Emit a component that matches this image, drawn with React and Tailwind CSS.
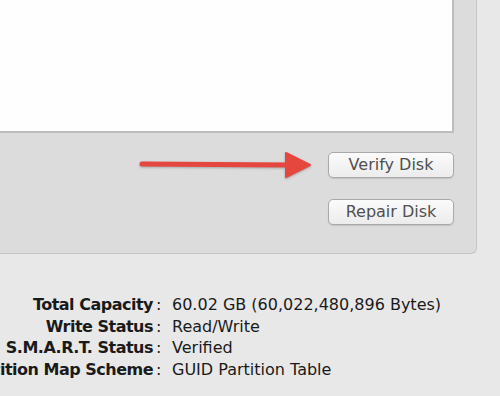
import React from "react";

const rows = [
    ["Total Capacity", "60.02 GB (60,022,480,896 Bytes)"],
    ["Write Status", "Read/Write"],
    ["S.M.A.R.T. Status", "Verified"],
    ["Partition Map Scheme", "GUID Partition Table"],
];

const MacButton = ({ children }) => (
    <button
        type="button"
        className="w-[126px] h-[26px] rounded-[5px] border border-[#a9a9a9] bg-gradient-to-b from-[#fbfbfb] to-[#ececec] shadow-[0_1px_1px_rgba(0,0,0,0.12)] text-[16px] text-[#505050] leading-none"
    >
        {children}
    </button>
);

const Arrow = () => (
    <svg width="176" height="30" viewBox="0 0 176 30" className="drop-shadow-[0_1px_1px_rgba(0,0,0,0.25)]">
        <line x1="4" y1="14" x2="152" y2="15" stroke="#e5473e" strokeWidth="5" strokeLinecap="round" />
        <polygon points="148,3 172,15 148,27" fill="#e5473e" strokeLinejoin="round" stroke="#e5473e" strokeWidth="2" />
    </svg>
);

export default function App() {
    return (
        <div className="w-[500px] h-[396px] overflow-hidden bg-[#e8e8e8] font-['DejaVu_Sans',sans-serif]">
            {/* Disk panel */}
            <div className="w-[477px] h-[254px] bg-[#dcdcdc] border-r border-b border-[#c4c4c4] rounded-br-[6px] flex flex-col">
                <div className="w-[454px] h-[133px] bg-[#fefefe] border-r-2 border-b-2 border-[#bdbdbd]" />
                <div className="flex items-start pr-[22px] pt-[19px]">
                    <div className="w-[138px] mt-[-2px]">
                        <div className="ml-[138px]">
                            <Arrow />
                        </div>
                    </div>
                    <div className="ml-auto flex flex-col gap-[21px]">
                        <MacButton>Verify Disk</MacButton>
                        <MacButton>Repair Disk</MacButton>
                    </div>
                </div>
            </div>

            {/* Info */}
            <div className="pt-[40px] text-[16px] leading-[21.5px] text-[#1a1a1a]">
                {rows.map(([label, value]) => (
                    <div key={label} className="flex">
                        <div className="w-[153px] shrink-0 flex justify-end whitespace-nowrap font-bold tracking-[-0.5px]">{label}</div>
                        <div className="w-[19px] shrink-0 pl-[3px]">:</div>
                        <div className="whitespace-nowrap">{value}</div>
                    </div>
                ))}
            </div>
        </div>
    );
}
